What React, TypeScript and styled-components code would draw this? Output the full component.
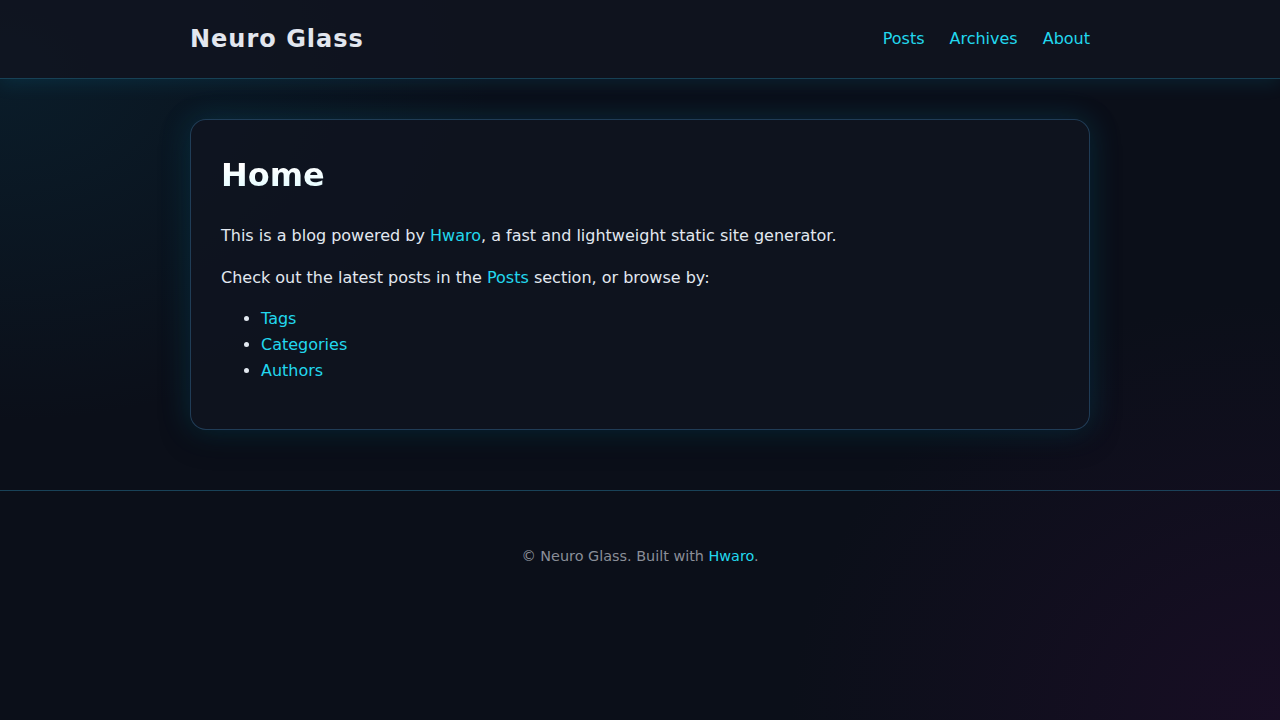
import React from 'react'
import styled, { createGlobalStyle } from 'styled-components'

const GlobalStyle = createGlobalStyle`
  html, body {
    margin: 0;
    padding: 0;
  }
  body {
    min-height: 100vh;
    font-family: 'DejaVu Sans', 'Noto Sans', sans-serif;
    color: #e2e8f0;
    background-color: #0b0f19;
    background-image:
      radial-gradient(ellipse 700px 500px at 0% 10%, rgba(8, 60, 80, 0.3), transparent 70%),
      radial-gradient(ellipse 700px 600px at 100% 100%, rgba(40, 12, 50, 0.45), transparent 70%);
    background-attachment: fixed;
  }
  #root {
    min-height: 100vh;
  }
`

const Header = styled.header`
  height: 78px;
  background: rgba(16, 20, 32, 0.85);
  border-bottom: 1px solid rgba(34, 120, 150, 0.45);
  box-shadow: 0 4px 18px rgba(0, 170, 220, 0.12);
`

const Container = styled.div`
  width: 900px;
  margin: 0 auto;
`

const HeaderInner = styled(Container)`
  height: 100%;
  display: flex;
  align-items: center;
  justify-content: space-between;
`

const Logo = styled.a`
  font-size: 24px;
  font-weight: 700;
  letter-spacing: 1px;
  color: #e2e6ee;
  text-decoration: none;
`

const Nav = styled.nav`
  display: flex;
  gap: 25px;
  margin-top: -2px;
`

const NavLink = styled.a`
  font-size: 16px;
  color: #22d8ee;
  text-decoration: none;
`

const Main = styled.main`
  padding: 40px 0 60px;
`

const Card = styled.article`
  background: rgba(15, 20, 32, 0.85);
  border: 1px solid rgba(45, 90, 125, 0.6);
  border-radius: 16px;
  padding: 30px;
  box-shadow: 0 0 30px rgba(0, 170, 220, 0.2), 0 8px 30px rgba(0, 0, 0, 0.35);
`

const Title = styled.h1`
  margin: 0 0 22px;
  font-size: 32px;
  line-height: 1.6;
  font-weight: 700;
  background: linear-gradient(180deg, #ffffff 30%, #d6fbff 100%);
  -webkit-background-clip: text;
  background-clip: text;
  color: transparent;
`

const Paragraph = styled.p`
  margin: 0 0 16px;
  font-size: 16px;
  line-height: 1.6;
  color: #e2e8f0;
`

const List = styled.ul`
  margin: 0 0 16px;
  padding-left: 40px;
  font-size: 16px;
  line-height: 1.6;
  color: #e2e8f0;
`

const Link = styled.a`
  color: #22d8ee;
  text-decoration: none;
`

const Footer = styled.footer`
  border-top: 1px solid rgba(35, 100, 130, 0.6);
  padding: 54px 0 40px;
  text-align: center;
  font-size: 14.4px;
  line-height: 1.6;
  color: #8a8e98;
`

export default function App() {
  return (
    <>
      <GlobalStyle />
      <Header>
        <HeaderInner>
          <Logo href="#">Neuro Glass</Logo>
          <Nav>
            <NavLink href="#">Posts</NavLink>
            <NavLink href="#">Archives</NavLink>
            <NavLink href="#">About</NavLink>
          </Nav>
        </HeaderInner>
      </Header>
      <Main>
        <Container>
          <Card>
            <Title>Home</Title>
            <Paragraph>
              This is a blog powered by <Link href="#">Hwaro</Link>, a fast and lightweight static
              site generator.
            </Paragraph>
            <Paragraph>
              Check out the latest posts in the <Link href="#">Posts</Link> section, or browse by:
            </Paragraph>
            <List>
              <li>
                <Link href="#">Tags</Link>
              </li>
              <li>
                <Link href="#">Categories</Link>
              </li>
              <li>
                <Link href="#">Authors</Link>
              </li>
            </List>
          </Card>
        </Container>
      </Main>
      <Footer>
        © Neuro Glass. Built with <Link href="#">Hwaro</Link>.
      </Footer>
    </>
  )
}
